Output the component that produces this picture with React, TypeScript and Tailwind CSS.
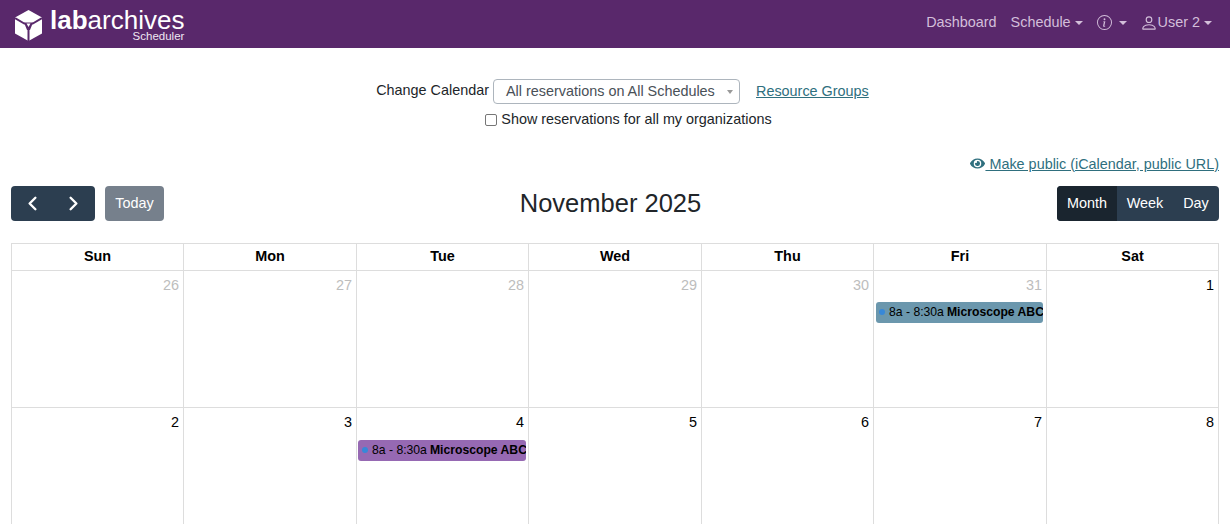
import { ChevronLeft, ChevronRight } from "lucide-react";
import { BsInfoCircle, BsPerson } from "react-icons/bs";
import { FaEye } from "react-icons/fa";

const DAYS = ["Sun", "Mon", "Tue", "Wed", "Thu", "Fri", "Sat"];

type Cell = { day: number; muted?: boolean; event?: string };

const WEEKS: Cell[][] = [
  [
    { day: 26, muted: true },
    { day: 27, muted: true },
    { day: 28, muted: true },
    { day: 29, muted: true },
    { day: 30, muted: true },
    { day: 31, muted: true, event: "ml-[2px] mr-[3px] mt-[8px] pl-[3px] bg-[#6b97ad]" },
    { day: 1 },
  ],
  [
    { day: 2 },
    { day: 3 },
    { day: 4, event: "ml-[1px] mr-[2px] mt-[9px] pl-[4px] bg-[#9669b3]" },
    { day: 5 },
    { day: 6 },
    { day: 7 },
    { day: 8 },
  ],
];

function Caret() {
  return <span className="ml-[4px] inline-block border-x-[4px] border-t-[4px] border-x-transparent border-t-current align-middle" />;
}

function Logo() {
  return (
    <div className="flex items-center gap-[8px]">
      <svg width="27" height="31" viewBox="0 0 27 31" className="mt-[3px]">
        <path d="M13.5 0 L27 7.5 L27 23.5 L13.5 31 L0 23.5 L0 7.5 Z" fill="#fff" />
        <path d="M0 8 L10 14 M27 8 L17 14 M13.5 18 L13.5 31" stroke="#59286b" strokeWidth="2" fill="none" />
        <path d="M9 12.5 L18 12.5 L15 20 L12 20 Z" fill="#59286b" />
        <path d="M11.5 13.5 L15.5 13.5 L13.5 17 Z" fill="#fff" />
      </svg>
      <div className="flex flex-col items-end">
        <div className="text-[26px] leading-[26px] text-white">
          <span className="font-bold">lab</span>
          <span>archives</span>
        </div>
        <div className="mt-[-2px] text-[11.5px] leading-[11px] text-[#efe7f2]">Scheduler</div>
      </div>
    </div>
  );
}

function Navbar() {
  return (
    <nav className="flex h-12 items-center justify-between bg-[#59286b] pl-[15px] pr-[18px] text-[14.4px] text-[#d3bfda]">
      <Logo />
      <div className="mb-[2px] flex items-center">
        <span>Dashboard</span>
        <span className="ml-[14px]">Schedule<Caret /></span>
        <span className="ml-[14px] flex items-center">
          <BsInfoCircle size={15} />
          <span className="ml-[3px] flex"><Caret /></span>
        </span>
        <span className="ml-[13px] flex items-center">
          <BsPerson size={18} />
          <span>User 2</span>
          <Caret />
        </span>
      </div>
    </nav>
  );
}

function Filters() {
  return (
    <div className="flex flex-col items-center pt-[31px] text-[14.4px] text-[#212529]">
      <div className="ml-[15px] flex items-start">
        <label className="mt-[1px]">Change Calendar</label>
        <div className="ml-[4px] flex h-[25px] w-[247px] items-center justify-between rounded-[4px] border border-[#adb5bd] pl-[12px] pr-[6px] pt-[1px] text-[#495057]">
          <span>All reservations on All Schedules</span>
          <span className="inline-block border-x-[3px] border-t-[4px] border-x-transparent border-t-[#999]" />
        </div>
        <a className="ml-[16px] mt-[2px] text-[#2f6f7e] underline">Resource Groups</a>
      </div>
      <label className="ml-[27px] mt-[5px] flex items-center">
        <span className="mr-[4px] h-[12px] w-[12px] rounded-[2px] border border-[#767676] bg-white" />
        Show reservations for all my organizations
      </label>
    </div>
  );
}

function Toolbar() {
  return (
    <div className="px-[11px]">
      <div className="mt-[23px] flex justify-end text-[14.4px] text-[#2f6f7e] underline">
        <span>
          <FaEye size={15} className="inline-block align-[-2px]" /> Make public (iCalendar, public URL)
        </span>
      </div>
      <div className="mt-[11px] flex items-center justify-between">
        <div className="flex w-[153px] items-center gap-[10px]">
          <div className="flex h-[35px] w-[84px] items-center justify-around rounded-[4px] bg-[#2c3e50] px-[1px] text-white">
            <ChevronLeft size={23} strokeWidth={2.5} />
            <ChevronRight size={23} strokeWidth={2.5} />
          </div>
          <div className="flex h-[35px] w-[59px] items-center justify-center rounded-[4px] bg-[#76808c] text-[14.4px] text-white">Today</div>
        </div>
        <h2 className="text-[25.5px] leading-[35px] text-[#212529]">November 2025</h2>
        <div className="flex h-[35px] w-[162px] overflow-hidden rounded-[4px] bg-[#2c3e50] text-[14.4px] text-white">
          <span className="flex w-[60px] items-center justify-center bg-[#1a252f]">Month</span>
          <span className="flex w-[56px] items-center justify-center">Week</span>
          <span className="flex w-[46px] items-center justify-center">Day</span>
        </div>
      </div>
    </div>
  );
}

function DayCell({ cell }: { cell: Cell }) {
  return (
    <div className="h-[137px] border-r border-b border-[#dddddd] last:border-r-0">
      <div className={`pr-[4px] pt-[6px] text-right text-[14.4px] leading-[17px] ${cell.muted ? "text-[#bdbdbd]" : "text-black"}`}>
        {cell.day}
      </div>
      {cell.event && (
        <div className={`flex h-[21px] items-center overflow-hidden whitespace-nowrap rounded-[3px] pb-[1px] text-[12.2px] text-black ${cell.event}`}>
          <span className="mr-[4px] h-[6px] w-[6px] shrink-0 rounded-full bg-[#3788d8]" />
          <span>8a - 8:30a</span>
          <span className="ml-[3px] font-bold">Microscope ABC</span>
        </div>
      )}
    </div>
  );
}

function Calendar() {
  return (
    <div className="mx-[11px] mt-[22px] border-t border-l border-r border-[#dddddd]">
      <div className="grid grid-cols-[172px_173px_172px_173px_172px_173px_1fr] border-b border-[#dddddd]">
        {DAYS.map((d) => (
          <div key={d} className="flex h-[26px] items-center justify-center border-r border-[#dddddd] text-[14.4px] font-bold text-black last:border-r-0">
            {d}
          </div>
        ))}
      </div>
      {WEEKS.map((week, i) => (
        <div key={i} className="grid grid-cols-[172px_173px_172px_173px_172px_173px_1fr]">
          {week.map((cell) => (
            <DayCell key={cell.day} cell={cell} />
          ))}
        </div>
      ))}
    </div>
  );
}

export default function App() {
  return (
    <div className="h-screen overflow-hidden bg-white font-['Liberation_Sans',Arial,sans-serif]">
      <Navbar />
      <Filters />
      <Toolbar />
      <Calendar />
    </div>
  );
}
